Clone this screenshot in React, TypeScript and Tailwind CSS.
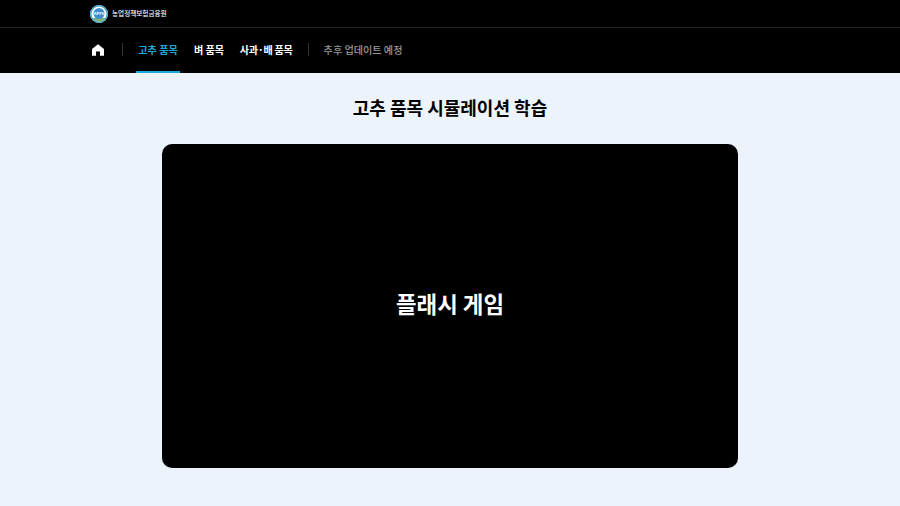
const font = 'font-["Noto_Sans_CJK_KR","Noto_Sans",sans-serif]';

function Logo() {
  return (
    <svg width="18" height="18" viewBox="0 0 36 36">
      <circle cx="18" cy="18" r="18" fill="#fff" />
      <circle cx="18" cy="18" r="16.5" fill="none" stroke="#3fa3c8" strokeWidth="3" />
      <path d="M5 26a15.5 15.5 0 0 0 26 0z" fill="#7fb56a" />
      <circle cx="18" cy="17" r="11" fill="#3f8fd0" />
      <text x="18" y="20" textAnchor="middle" fontSize="8" fontWeight="700" fill="#fff">APFS</text>
    </svg>
  );
}

function HomeIcon() {
  return (
    <svg width="12" height="12" viewBox="0 0 12 12" fill="#fff">
      <path d="M6 .3 12 5v6.7H8V7.6H4v4.1H0V5z" />
    </svg>
  );
}

export default function App() {
  return (
    <div className={`${font} flex h-[506px] w-[900px] flex-col overflow-hidden bg-[#edf3fa]`}>
      <header className="bg-black">
        <div className="h-[28px] border-b border-[#222]">
          <div className="flex h-[27px] items-center gap-1 pl-[90px]">
            <Logo />
            <span className="text-[6.6px] font-medium leading-none text-white">농업정책보험금융원</span>
          </div>
        </div>
        <nav className="flex h-[44.5px] items-center pb-px pl-[92px]">
          <HomeIcon />
          <div className="ml-[18px] h-[13px] w-px bg-[#333]" />
          <div className="relative ml-[13px] flex h-full w-[44px] items-center justify-center">
            <span className="whitespace-nowrap text-[10.1px] font-bold text-[#1fa9d6]">고추 품목</span>
            <div className="absolute -bottom-px left-0 h-[2px] w-full bg-[#1fa9d6]" />
          </div>
          <span className="ml-[14px] whitespace-nowrap text-[10.1px] font-bold text-white">벼 품목</span>
          <span className="ml-[15.5px] whitespace-nowrap text-[10.1px] font-bold tracking-[-0.25px] text-white">사과·배 품목</span>
          <div className="ml-[15px] h-[13px] w-px bg-[#333]" />
          <span className="ml-[15px] whitespace-nowrap text-[10.1px] font-medium text-[#9a9a9a]">추후 업데이트 예정</span>
        </nav>
      </header>
      <main className="flex flex-1 flex-col items-center">
        <h1 className="mt-[20.5px] text-[18px] font-bold leading-[28px] text-black">고추 품목 시뮬레이션 학습</h1>
        <div className="mt-[23px] flex h-[324px] w-[576px] items-center justify-center rounded-[10px] bg-black pb-1">
          <span className="text-[22.4px] font-bold text-white">플래시 게임</span>
        </div>
      </main>
    </div>
  );
}
